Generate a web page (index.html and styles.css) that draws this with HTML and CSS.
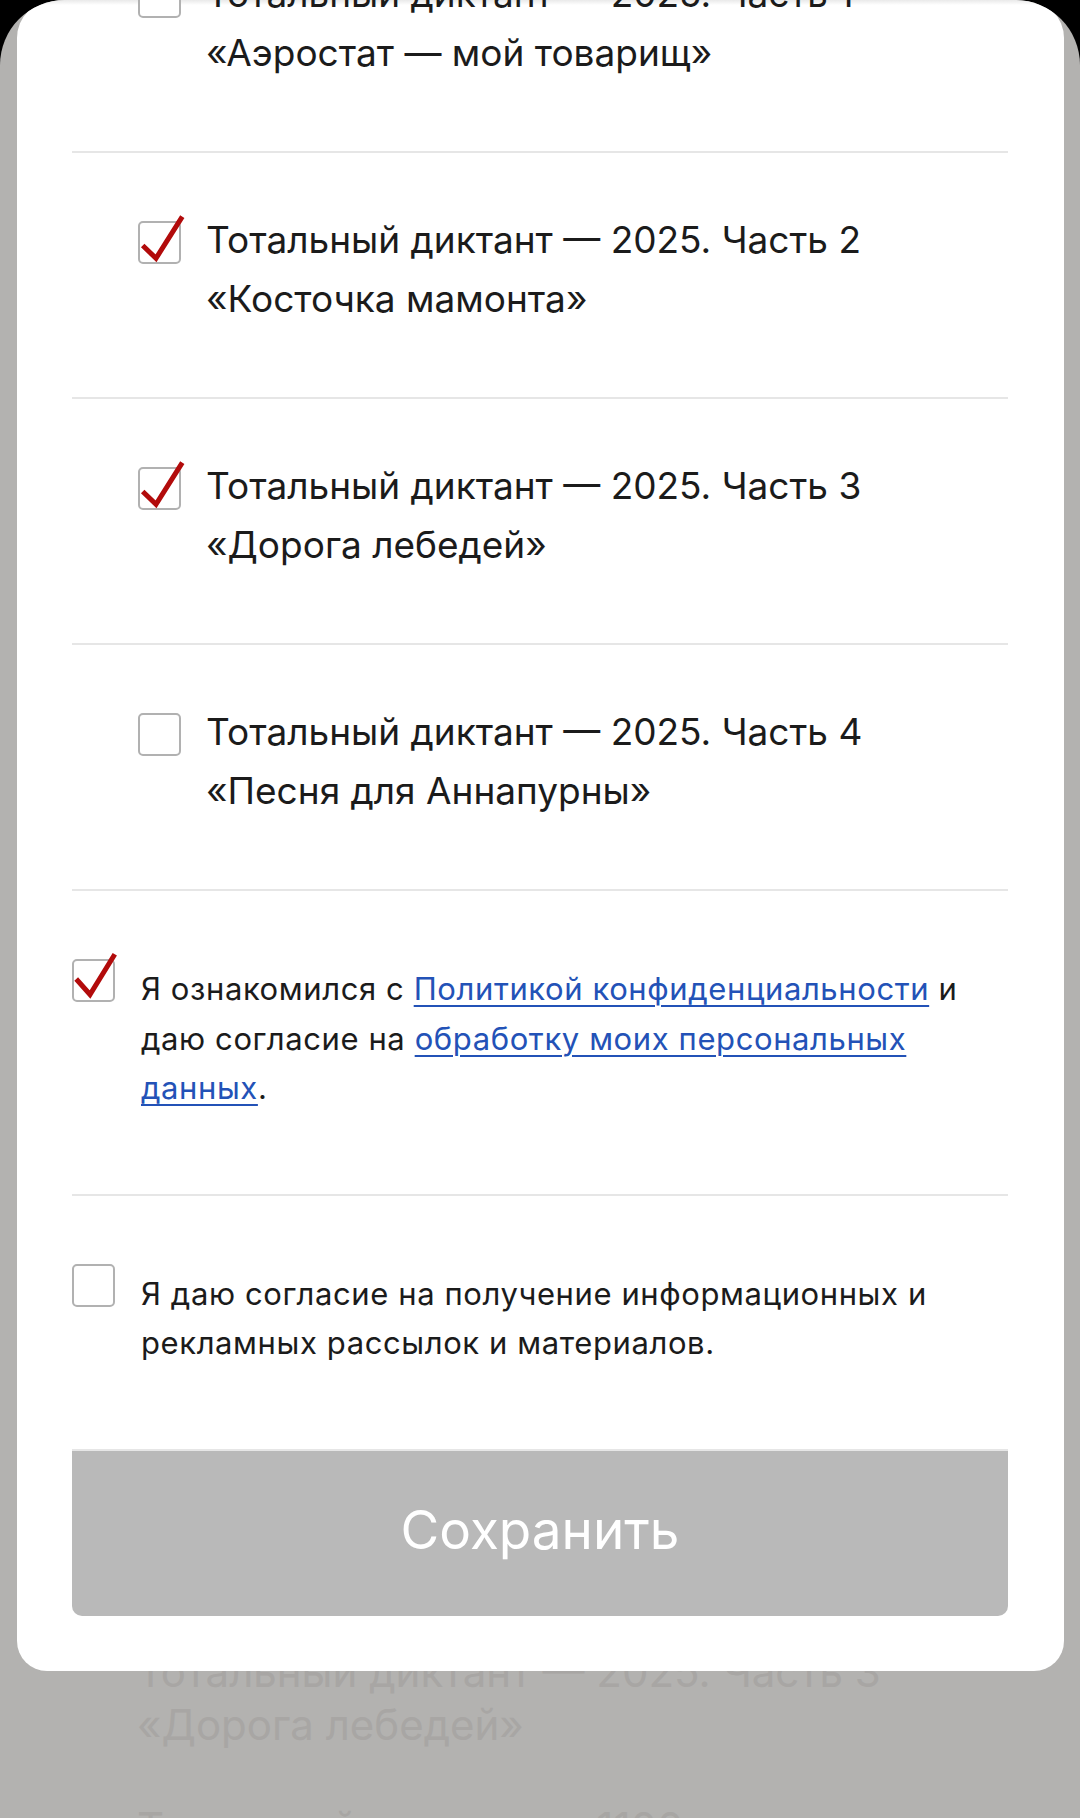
FILE: index.html
```html
<!DOCTYPE html>
<html lang="ru">
<head>
<meta charset="utf-8">
<title>Тотальный диктант</title>
<link rel="stylesheet" href="styles.css">
</head>
<body>
<div class="screen">
  <div class="page">
    <div class="page-item">
      <span class="line">Тотальный диктант — 2025. Часть 3</span>
      <span class="line">«Дорога лебедей»</span>
    </div>
    <div class="page-item">
      <span class="line">Тотальный диктант — 1100 лет</span>
      <span class="line">«Русское слово»</span>
    </div>
  </div>

  <div class="modal">
    <div class="list">
      <label class="row item">
        <span class="box"></span>
        <span class="title"><span class="line">Тотальный диктант — 2025. Часть 1</span><span class="line">«Аэростат — мой товарищ»</span></span>
      </label>
      <label class="row item">
        <span class="box checked"><svg viewBox="0 0 43 43"><path d="M4.7 24.5 L18 37.3 L44.3 -4.3"/></svg></span>
        <span class="title"><span class="line">Тотальный диктант — 2025. Часть 2</span><span class="line">«Косточка мамонта»</span></span>
      </label>
      <label class="row item">
        <span class="box checked"><svg viewBox="0 0 43 43"><path d="M4.7 24.5 L18 37.3 L44.3 -4.3"/></svg></span>
        <span class="title"><span class="line">Тотальный диктант — 2025. Часть 3</span><span class="line">«Дорога лебедей»</span></span>
      </label>
      <label class="row item">
        <span class="box"></span>
        <span class="title"><span class="line">Тотальный диктант — 2025. Часть 4</span><span class="line">«Песня для Аннапурны»</span></span>
      </label>
      <div class="row consent">
        <span class="box checked"><svg viewBox="0 0 43 43"><path d="M4.2 20 L18 35.5 L42.8 -4.8"/></svg></span>
        <p class="note">Я ознакомился с <a href="#">Политикой конфиденциальности</a> и даю согласие на <a href="#">обработку моих персональных данных</a>.</p>
      </div>
      <div class="row consent">
        <span class="box"></span>
        <p class="note">Я даю согласие на получение информационных и рекламных рассылок и материалов.</p>
      </div>
    </div>
    <button class="save" type="button">Сохранить</button>
  </div>
</div>
</body>
</html>
```

FILE: styles.css
```css
* { box-sizing: border-box; }

html, body {
  margin: 0;
  padding: 0;
  background: #000;
}

body {
  font-family: Inter, "Noto Sans", sans-serif;
  color: #1b1b1b;
}

.screen {
  position: relative;
  width: 1080px;
  height: 1818px;
  background: #b3b2b0;
  border-radius: 65px 65px 0 0;
  overflow: hidden;
}

/* dimmed page behind the modal */
.page {
  padding: 1645px 0 0 137px;
  color: #a8a6a4;
  font-size: 42px;
  line-height: 53px;
}

.page-item {
  margin-bottom: 50px;
}

.line {
  display: block;
}

/* modal sheet */
.modal {
  position: absolute;
  top: 0;
  left: 17px;
  width: 1047px;
  padding: 0 56px 55px 55px;
  background: linear-gradient(#e9e9e9, #fff 5px);
  border-radius: 38px 38px 30px 30px;
  overflow: hidden;
}

.list {
  margin-top: -93px;
}

.row {
  display: flex;
  align-items: flex-start;
  border-bottom: 2px solid #e6e6e6;
}

.item {
  padding: 57px 0 69px 66px;
  gap: 25px;
  font-size: 37px;
  line-height: 59px;
}

.item .box {
  margin-top: 11px;
}

.consent {
  padding: 73px 0 81px 0;
  gap: 26px;
}

.consent .box {
  margin-top: -5px;
}

.box {
  position: relative;
  flex: none;
  width: 43px;
  height: 43px;
  border: 2px solid #b1b1b1;
  border-radius: 5px;
  background: #fff;
}

.box svg {
  position: absolute;
  left: -2px;
  top: -2px;
  width: 43px;
  height: 43px;
  overflow: visible;
}

.box path {
  fill: none;
  stroke: #b20b0b;
  stroke-width: 5;
  stroke-linejoin: miter;
}

.title {
  display: block;
}

.note {
  margin: 0;
  font-size: 31px;
  letter-spacing: 0.6px;
  line-height: 49.5px;
}

.note a {
  color: #2352b7;
  text-decoration: underline;
  text-decoration-thickness: 2px;
  text-underline-offset: 5px;
}

.save {
  display: flex;
  align-items: center;
  justify-content: center;
  width: 100%;
  height: 165px;
  padding: 0 0 6px 0;
  border: none;
  border-radius: 0 0 10px 10px;
  background: #b9b9b9;
  color: #fff;
  font-family: Inter, "Noto Sans", sans-serif;
  font-size: 53px;
}
```
